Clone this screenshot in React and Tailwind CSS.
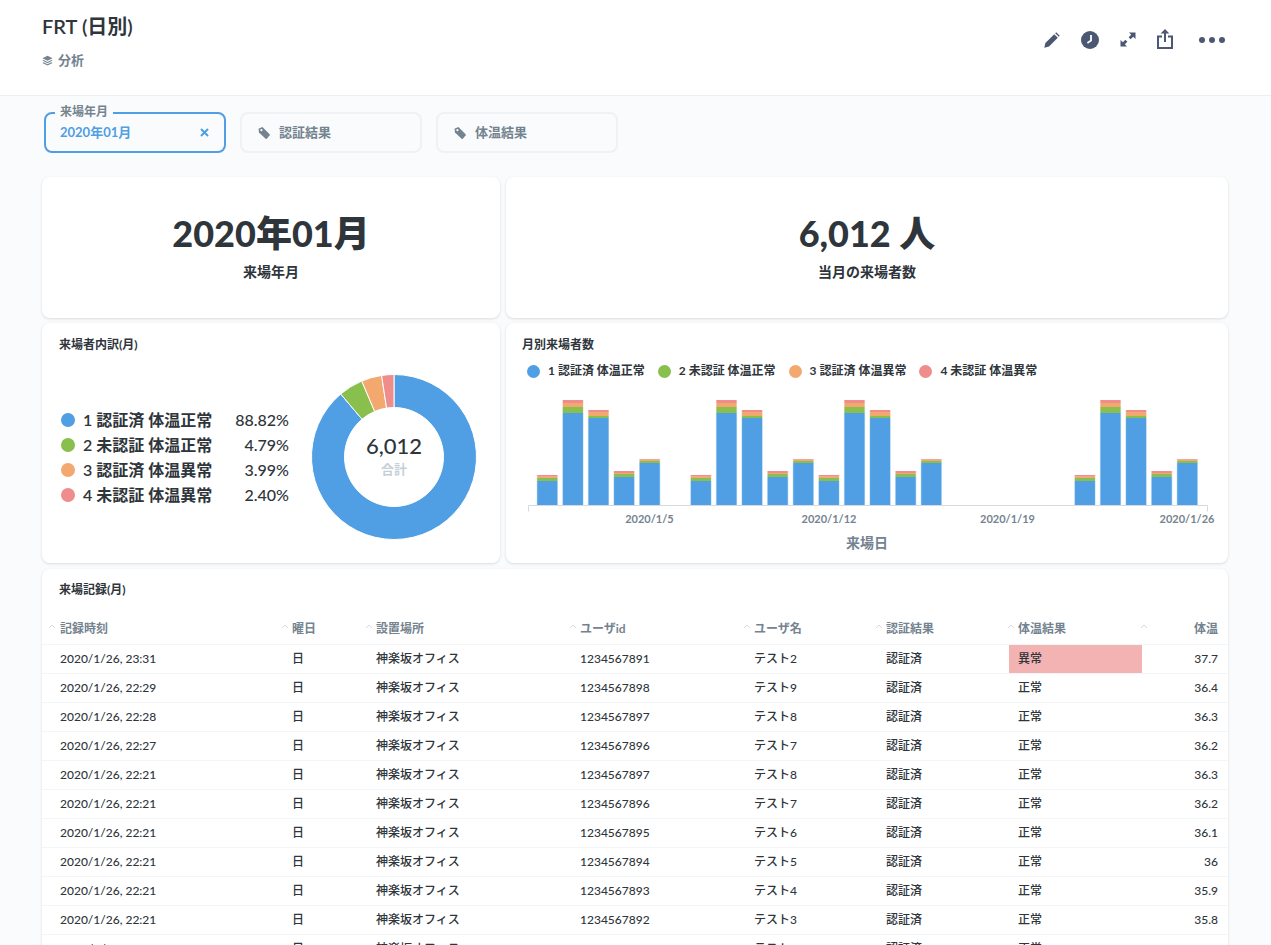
import React from 'react';

const BLUE = '#509ee3';
const GREEN = '#88bf4d';
const ORANGE = '#f2a86f';
const RED = '#ef8c8c';

const legend = [
  { label: '1 認証済 体温正常', pct: '88.82%', value: 88.82, color: BLUE },
  { label: '2 未認証 体温正常', pct: '4.79%', value: 4.79, color: GREEN },
  { label: '3 認証済 体温異常', pct: '3.99%', value: 3.99, color: ORANGE },
  { label: '4 未認証 体温異常', pct: '2.40%', value: 2.4, color: RED },
];

// stacked heights per weekday pattern [blue, green, orange, red]
const patterns = {
  A: [24, 3, 1.5, 1.5],
  B: [92, 6, 4, 3],
  C: [87, 2, 4, 2],
  D: [28, 3, 1, 2],
  E: [42, 2, 1.5, 0.5],
};

const bars = [
  [0, 'A'], [1, 'B'], [2, 'C'], [3, 'D'], [4, 'E'],
  [6, 'A'], [7, 'B'], [8, 'C'], [9, 'D'], [10, 'E'],
  [11, 'A'], [12, 'B'], [13, 'C'], [14, 'D'], [15, 'E'],
  [21, 'A'], [22, 'B'], [23, 'C'], [24, 'D'], [25, 'E'],
];

const rows = [
  ['2020/1/26, 23:31', '1234567891', 'テスト2', '異常', '37.7'],
  ['2020/1/26, 22:29', '1234567898', 'テスト9', '正常', '36.4'],
  ['2020/1/26, 22:28', '1234567897', 'テスト8', '正常', '36.3'],
  ['2020/1/26, 22:27', '1234567896', 'テスト7', '正常', '36.2'],
  ['2020/1/26, 22:21', '1234567897', 'テスト8', '正常', '36.3'],
  ['2020/1/26, 22:21', '1234567896', 'テスト7', '正常', '36.2'],
  ['2020/1/26, 22:21', '1234567895', 'テスト6', '正常', '36.1'],
  ['2020/1/26, 22:21', '1234567894', 'テスト5', '正常', '36'],
  ['2020/1/26, 22:21', '1234567893', 'テスト4', '正常', '35.9'],
  ['2020/1/26, 22:21', '1234567892', 'テスト3', '正常', '35.8'],
  ['2020/1/26, 22:21', '1234567891', 'テスト2', '正常', '35.7'],
];

const headers = ['記録時刻', '曜日', '設置場所', 'ユーザid', 'ユーザ名', '認証結果', '体温結果', '体温'];

function Donut() {
  const cx = 83;
  const cy = 83;
  const R = 82.5;
  const r = 49.5;
  let start = 0;
  const slices = legend.map((s) => {
    const a0 = (start / 100) * Math.PI * 2;
    start += s.value;
    const a1 = (start / 100) * Math.PI * 2;
    const p = (rad, an) => `${(cx + rad * Math.sin(an)).toFixed(2)} ${(cy - rad * Math.cos(an)).toFixed(2)}`;
    const large = a1 - a0 > Math.PI ? 1 : 0;
    const d = `M${p(R, a0)} A${R} ${R} 0 ${large} 1 ${p(R, a1)} L${p(r, a1)} A${r} ${r} 0 ${large} 0 ${p(r, a0)} Z`;
    return <path key={s.label} d={d} fill={s.color} stroke="#ffffff" strokeWidth="1" />;
  });
  return (
    <svg width="166" height="166" viewBox="0 0 166 166" className="block">
      {slices}
      <text x="83" y="80" textAnchor="middle" fontSize="22" fontWeight="500" fill="#2e353b">6,012</text>
      <text x="83" y="100" textAnchor="middle" fontSize="13" fontWeight="700" fill="#c6cfd6">合計</text>
    </svg>
  );
}

function BarChart() {
  const base = 120;
  return (
    <svg width="722" height="170" viewBox="0 0 722 170" className="block">
      {bars.map(([i, key]) => {
        const x = 31.3 + i * 25.6;
        let top = base;
        const colors = [BLUE, GREEN, ORANGE, RED];
        return (
          <g key={i}>
            {patterns[key].map((h, n) => {
              top -= h;
              return (
                <g key={n}>
                  <rect x={x - 0.6} y={top} width="21.2" height={h} fill={colors[n]} opacity="0.35" />
                  <rect x={x} y={top} width="20" height={h} fill={colors[n]} />
                </g>
              );
            })}
          </g>
        );
      })}
      <path d="M22.5 126.5 V120.5 H701.5 V126.5" fill="none" stroke="#d3dae0" strokeWidth="1" />
      <g fontSize="11" fontWeight="700" fill="#74838f" textAnchor="middle">
        <text x="143.5" y="138">2020/1/5</text>
        <text x="323" y="138">2020/1/12</text>
        <text x="501.5" y="138">2020/1/19</text>
        <text x="681" y="138">2020/1/26</text>
      </g>
      <text x="361" y="163" textAnchor="middle" fontSize="14" fontWeight="700" fill="#74838f">来場日</text>
    </svg>
  );
}

function Chevron({ className }) {
  return (
    <svg width="8" height="5" viewBox="0 0 8 5" className={className}>
      <path d="M1 4 L4 1 L7 4" fill="none" stroke="#d5dce1" strokeWidth="1" />
    </svg>
  );
}

function TagIcon() {
  return (
    <svg width="14" height="14" viewBox="0 0 14 14" className="shrink-0">
      <path d="M1.5 2.8 L5.4 1 L12.6 8.2 Q13 8.7 12.7 9.2 L9.8 12.8 Q9.2 13.3 8.6 12.8 L2 6.6 Z" fill="#74838f" />
      <circle cx="4.4" cy="4.2" r="1.1" fill="#f9fbfc" />
    </svg>
  );
}

function FilterBox({ label }) {
  return (
    <div className="flex h-[41px] w-[182px] items-center gap-2 rounded-lg border-2 border-[#eff1f3] pl-[15px] text-[13px] font-bold text-[#74838f]">
      <TagIcon />
      <span>{label}</span>
    </div>
  );
}

function Legend({ color, label }) {
  return (
    <div className="flex items-center gap-2">
      <span className="h-[13px] w-[13px] rounded-full" style={{ backgroundColor: color }} />
      <span>{label}</span>
    </div>
  );
}

export default function App() {
  return (
    <div className="h-[945px] overflow-hidden bg-[#f9fbfc] font-['Lato','Noto_Sans_CJK_JP',sans-serif] text-[#2e353b]">
      {/* Header */}
      <div className="flex h-[96px] items-start justify-between border-b border-[#eceff1] bg-white pl-[42px] pr-[46px]">
        <div>
          <div className="mt-[12px] text-[20px] font-semibold leading-[28px]">FRT (日別)</div>
          <div className="mt-[10px] flex items-center gap-[5px] text-[13px] font-bold leading-[20px] text-[#74838f]">
            <svg width="11" height="11" viewBox="0 0 12 12">
              <path d="M6 0.8 L11.5 3.6 L6 6.4 L0.5 3.6 Z" fill="#74838f" />
              <path d="M1.8 5.4 L6 7.6 L10.2 5.4 L11.5 6.1 L6 8.9 L0.5 6.1 Z" fill="#74838f" />
              <path d="M1.8 7.9 L6 10.1 L10.2 7.9 L11.5 8.6 L6 11.4 L0.5 8.6 Z" fill="#74838f" />
            </svg>
            <span>分析</span>
          </div>
        </div>
        <div className="mt-[29px] flex items-center">
          <svg width="16" height="16" viewBox="0 0 16 16" className="mt-[2px]">
            <path d="M0.3 15.7 L1.4 11 L10.2 2.2 L13.8 5.8 L5 14.6 Z M11.2 1.2 L12.2 0.3 L15.7 3.8 L14.8 4.8 Z" fill="#4c5773" />
          </svg>
          <svg width="18" height="18" viewBox="0 0 18 18" className="ml-[21px] mt-[2px]">
            <circle cx="9" cy="9" r="9" fill="#4c5773" />
            <path d="M10 4 V9.6 L6.4 12" fill="none" stroke="#ffffff" strokeWidth="1.8" />
          </svg>
          <svg width="16" height="15" viewBox="0 0 16 15" className="ml-[21px] mt-[1px]">
            <path d="M9 0.5 H15.5 V7 L13.2 4.7 L10.6 7.3 L8.6 5.3 L11.2 2.7 Z M0.5 8 L2.8 10.3 L5.4 7.7 L7.4 9.7 L4.8 12.3 L7 14.5 H0.5 Z" fill="#4c5773" />
          </svg>
          <svg width="16" height="20" viewBox="0 0 16 20" className="ml-[21px]">
            <path d="M8 0 L12.4 4.6 H9 V13 H7 V4.6 H3.6 Z" fill="#4c5773" />
            <path d="M5 7.5 H1 V19 H15 V7.5 H11" fill="none" stroke="#4c5773" strokeWidth="2" />
          </svg>
          <div className="ml-[26px] mt-[1px] flex gap-[4px]">
            <span className="h-[6px] w-[6px] rounded-full bg-[#4c5773]" />
            <span className="h-[6px] w-[6px] rounded-full bg-[#4c5773]" />
            <span className="h-[6px] w-[6px] rounded-full bg-[#4c5773]" />
          </div>
        </div>
      </div>

      {/* Filters */}
      <div className="flex gap-[14px] pl-[44px] pt-[16px]">
        <div className="relative flex h-[41px] w-[182px] items-center justify-between rounded-lg border-2 border-[#509ee3] pl-[14px] pr-[15px] text-[13px] font-bold text-[#509ee3]">
          <span className="absolute left-[9px] top-[-10px] bg-[#f9fbfc] px-[5px] text-[12px] font-bold leading-[16px] text-[#74838f]">来場年月</span>
          <span>2020年01月</span>
          <svg width="9" height="9" viewBox="0 0 9 9">
            <path d="M1 1 L8 8 M8 1 L1 8" stroke="#509ee3" strokeWidth="2" />
          </svg>
        </div>
        <FilterBox label="認証結果" />
        <FilterBox label="体温結果" />
      </div>

      {/* Cards */}
      <div className="mx-[42px] mt-[24px] grid grid-cols-[458px_722px] gap-x-[6px] gap-y-[5px]">
        <div className="flex h-[141px] flex-col items-center rounded-lg bg-white pt-[31px] shadow-[0_1px_3px_rgba(0,0,0,0.13)]">
          <div className="text-[36px] font-black leading-[50px]">2020年01月</div>
          <div className="mt-[4px] text-[14px] font-bold leading-[20px]">来場年月</div>
        </div>
        <div className="flex h-[141px] flex-col items-center rounded-lg bg-white pt-[31px] shadow-[0_1px_3px_rgba(0,0,0,0.13)]">
          <div className="text-[36px] font-black leading-[50px]">6,012 人</div>
          <div className="mt-[4px] text-[14px] font-bold leading-[20px]">当月の来場者数</div>
        </div>

        <div className="h-[240px] rounded-lg bg-white shadow-[0_1px_3px_rgba(0,0,0,0.13)]">
          <div className="pl-[17px] pt-[13px] text-[12px] font-bold leading-[18px]">来場者内訳(月)</div>
          <div className="mt-[20px] flex items-center pl-[19px]">
            <div className="grid w-[228px] grid-cols-[1fr_auto] text-[16px] font-semibold leading-[25px]">
              {legend.map((s) => (
                <React.Fragment key={s.label}>
                  <div className="flex items-center gap-2">
                    <span className="h-[14px] w-[14px] rounded-full" style={{ backgroundColor: s.color }} />
                    <span>{s.label}</span>
                  </div>
                  <div className="text-right font-medium">{s.pct}</div>
                </React.Fragment>
              ))}
            </div>
            <div className="ml-[22px]">
              <Donut />
            </div>
          </div>
        </div>
        <div className="h-[240px] rounded-lg bg-white shadow-[0_1px_3px_rgba(0,0,0,0.13)]">
          <div className="pl-[16px] pt-[13px] text-[12px] font-bold leading-[18px]">月別来場者数</div>
          <div className="mt-[8px] flex gap-[13px] pl-[21px] text-[12px] font-bold leading-[18px]">
            {legend.map((s) => (
              <Legend key={s.label} color={s.color} label={s.label} />
            ))}
          </div>
          <div className="mt-[5px]">
            <BarChart />
          </div>
        </div>

        {/* Table */}
        <div className="col-span-2 mt-px rounded-lg bg-white shadow-[0_1px_3px_rgba(0,0,0,0.13)]">
          <div className="pl-[17px] pt-[12px] text-[12px] font-bold leading-[18px]">来場記録(月)</div>
          <table className="mt-[15px] w-full table-fixed border-collapse text-[12px] font-medium">
            <colgroup>
              <col className="w-[241px]" />
              <col className="w-[84px]" />
              <col className="w-[204px]" />
              <col className="w-[174px]" />
              <col className="w-[132px]" />
              <col className="w-[132px]" />
              <col className="w-[133px]" />
              <col className="w-[86px]" />
            </colgroup>
            <thead>
              <tr className="h-[30px] border-b border-[#f3f5f6]">
                {headers.map((h, i) => (
                  <th
                    key={h}
                    className={`relative font-bold text-[#74838f] ${
                      i === 0 ? 'pl-[18px] text-left' : i === 7 ? 'pr-[10px] text-right' : 'pl-[9px] text-left'
                    }`}
                  >
                    <Chevron className={`absolute top-[10px] ${i === 0 ? 'left-[6px]' : i === 7 ? 'left-[-2px]' : 'left-[-2px]'}`} />
                    {h}
                  </th>
                ))}
              </tr>
            </thead>
            <tbody>
              {rows.map((r, i) => (
                <tr key={i} className="h-[29px] border-b border-[#f3f5f6]">
                  <td className="pl-[18px]">{r[0]}</td>
                  <td className="pl-[9px]">日</td>
                  <td className="pl-[9px]">神楽坂オフィス</td>
                  <td className="pl-[9px]">{r[1]}</td>
                  <td className="pl-[9px]">{r[2]}</td>
                  <td className="pl-[9px]">認証済</td>
                  <td className={`pl-[9px] ${r[3] === '異常' ? 'bg-[#f4b3b3]' : ''}`}>{r[3]}</td>
                  <td className="pr-[10px] text-right">{r[4]}</td>
                </tr>
              ))}
            </tbody>
          </table>
        </div>
      </div>
    </div>
  );
}
